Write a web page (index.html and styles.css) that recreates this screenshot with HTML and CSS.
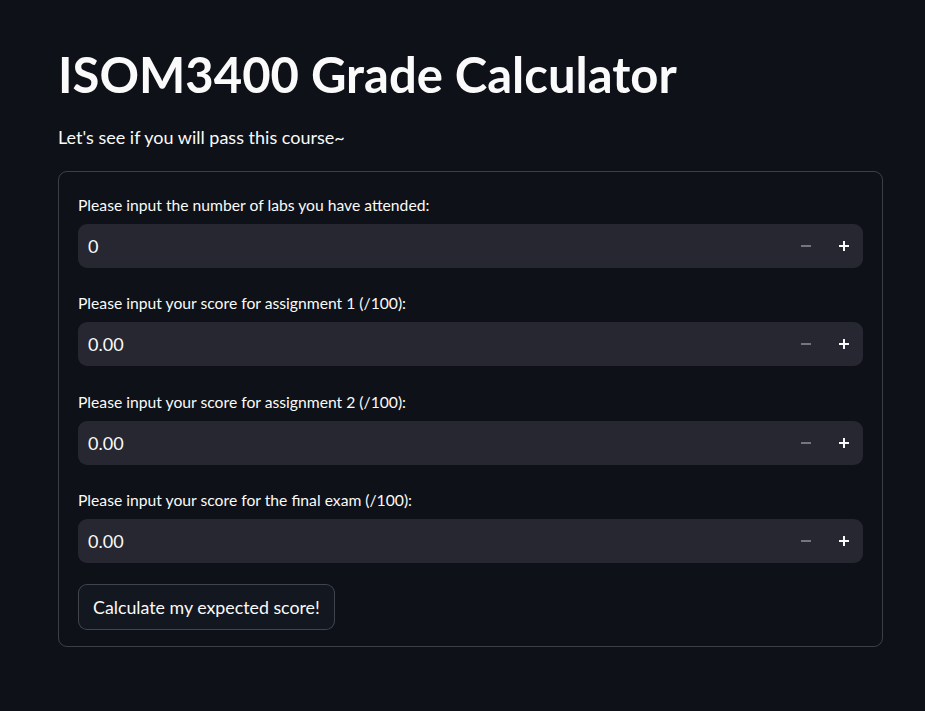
FILE: index.html
```html
<!DOCTYPE html>
<html lang="en">
<head>
<meta charset="utf-8">
<title>ISOM3400 Grade Calculator</title>
<link rel="stylesheet" href="styles.css">
</head>
<body>
<main class="main">
  <h1 class="title">ISOM3400 Grade Calculator</h1>
  <p class="subtitle">Let's see if you will pass this course~</p>
  <form class="form">
    <div class="field">
      <label class="label">Please input the number of labs you have attended:</label>
      <div class="number-input">
        <input class="value" type="text" value="0">
        <button type="button" class="step minus"><span class="bar"></span></button>
        <button type="button" class="step plus"><span class="bar"></span><span class="bar vert"></span></button>
      </div>
    </div>
    <div class="field">
      <label class="label">Please input your score for assignment 1 (/100):</label>
      <div class="number-input">
        <input class="value" type="text" value="0.00">
        <button type="button" class="step minus"><span class="bar"></span></button>
        <button type="button" class="step plus"><span class="bar"></span><span class="bar vert"></span></button>
      </div>
    </div>
    <div class="field">
      <label class="label">Please input your score for assignment 2 (/100):</label>
      <div class="number-input">
        <input class="value" type="text" value="0.00">
        <button type="button" class="step minus"><span class="bar"></span></button>
        <button type="button" class="step plus"><span class="bar"></span><span class="bar vert"></span></button>
      </div>
    </div>
    <div class="field">
      <label class="label">Please input your score for the final exam (/100):</label>
      <div class="number-input">
        <input class="value" type="text" value="0.00">
        <button type="button" class="step minus"><span class="bar"></span></button>
        <button type="button" class="step plus"><span class="bar"></span><span class="bar vert"></span></button>
      </div>
    </div>
    <div class="actions">
      <button type="button" class="submit">Calculate my expected score!</button>
    </div>
  </form>
</main>
</body>
</html>
```

FILE: styles.css
```css
html, body {
  margin: 0;
  padding: 0;
  background: #0e1117;
  color: #fafafa;
  font-family: Lato, "Liberation Sans", sans-serif;
}

.main {
  width: 825px;
  padding: 0 0 0 58px;
}

.title {
  margin: 0;
  padding-top: 44px;
  font-size: 49px;
  font-weight: 700;
  line-height: 60px;
}

.subtitle {
  margin: 20px 0 0 0;
  font-size: 18px;
  line-height: 26px;
}

.form {
  margin-top: 21px;
  border: 1px solid rgba(250, 250, 250, 0.2);
  border-radius: 9px;
  padding: 22px 19px 16px 19px;
  display: flex;
  flex-direction: column;
}

.field {
  display: flex;
  flex-direction: column;
  margin-bottom: 24.33px;
}

.label {
  font-size: 15.7px;
  line-height: 22px;
  margin-bottom: 8px;
}

.number-input {
  display: flex;
  align-items: center;
  height: 44px;
  background: #262730;
  border-radius: 9px;
}

.value {
  flex: 1;
  min-width: 0;
  height: 100%;
  border: none;
  outline: none;
  background: transparent;
  color: #fafafa;
  font-family: inherit;
  font-size: 18px;
  padding: 0 0 0 10px;
}

.step {
  position: relative;
  width: 38px;
  height: 100%;
  border: none;
  background: transparent;
  padding: 0;
  display: flex;
  align-items: center;
  justify-content: center;
}

.step .bar {
  display: block;
  width: 10px;
  height: 2px;
  background: #75767d;
}

.plus .bar {
  background: #fafafa;
  width: 10px;
}

.plus .bar.vert {
  position: absolute;
  width: 2px;
  height: 10px;
}

.actions {
  margin-top: -3.5px;
  display: flex;
}

.submit {
  height: 46px;
  padding: 0 14px;
  border: 1px solid rgba(250, 250, 250, 0.2);
  border-radius: 9px;
  background: #131720;
  color: #fafafa;
  font-family: inherit;
  font-size: 17.8px;
}
```
